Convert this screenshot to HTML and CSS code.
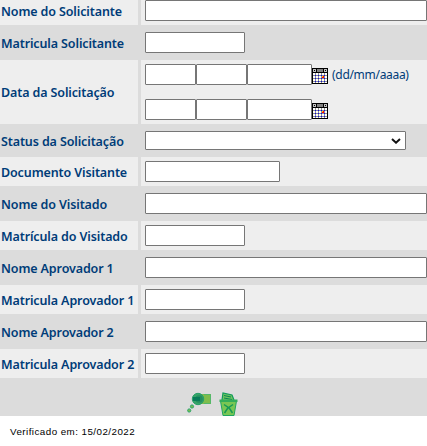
FILE: index.html
```html
<!DOCTYPE html>
<html lang="pt-BR">
<head>
<meta charset="utf-8">
<title>Solicitação</title>
<link rel="stylesheet" href="styles.css">
</head>
<body>
<svg width="0" height="0" class="defs" aria-hidden="true">
  <defs>
    <pattern id="days" width="3" height="3" patternUnits="userSpaceOnUse" x="1" y="5">
      <rect width="3" height="3" fill="#fff"/>
      <path d="M2 0h1v3h-3v-1h2z" fill="#909090"/>
      <path d="M2 2h1v1h-1z" fill="#0000f0"/>
    </pattern>
    <symbol id="calendar" viewBox="0 0 16 16">
      <path d="M0 0h16v16H0z"/>
      <path d="M1 1h3v3H1zM12 1h3v3h-3z" fill="#c0c0c0"/>
      <path d="M5 1h6v3H5z" fill="#808080"/>
      <path d="M2 2h1v1H2zM13 2h1v1h-1z"/>
      <path d="M1 5h14v10H1z" fill="url(#days)"/>
      <path d="M10 8h2v2h-2z" fill="red"/>
      <path d="M10 8h1v1h-1z" fill="#ffe000"/>
    </symbol>
  </defs>
</svg>
<form class="form">
  <div class="row first"><label>Nome do Solicitante</label><div class="field"><input class="full"></div></div>
  <div class="row dark"><label>Matricula Solicitante</label><div class="field"><input class="short"></div></div>
  <div class="row dates"><label>Data da Solicitação</label><div class="field stack">
    <div class="date"><input class="day"><input class="day"><input class="year"><svg class="cal"><use href="#calendar"/></svg><span class="hint">(dd/mm/aaaa)</span></div>
    <div class="date"><input class="day"><input class="day"><input class="year"><svg class="cal"><use href="#calendar"/></svg></div>
  </div></div>
  <div class="row dark status"><label>Status da Solicitação</label><div class="field"><div class="select"><svg width="10" height="6" viewBox="0 0 10 6"><path d="M1 1l4 3.7L9 1" fill="none" stroke="#111" stroke-width="2"/></svg></div></div></div>
  <div class="row"><label>Documento Visitante</label><div class="field"><input class="medium"></div></div>
  <div class="row dark"><label>Nome do Visitado</label><div class="field"><input class="full"></div></div>
  <div class="row"><label>Matrícula do Visitado</label><div class="field"><input class="short"></div></div>
  <div class="row dark"><label>Nome Aprovador 1</label><div class="field"><input class="full"></div></div>
  <div class="row"><label>Matricula Aprovador 1</label><div class="field"><input class="short"></div></div>
  <div class="row dark"><label>Nome Aprovador 2</label><div class="field"><input class="full"></div></div>
  <div class="row"><label>Matricula Aprovador 2</label><div class="field"><input class="short"></div></div>
  <div class="actions">
    <svg width="24" height="21" viewBox="0 0 24 21">
      <path d="M12 2h12v10H12z" fill="#7fbd4c"/>
      <path d="M17 2.5h6.5v9H17" fill="none" stroke="#55b86a"/>
      <circle cx="11" cy="7" r="5.7" fill="#36a567" stroke="#279e69"/>
      <circle cx="12" cy="7" r="3.8" fill="#248e60"/>
      <path d="M6 5h7v4H6z" fill="#087c59"/>
      <circle cx="5" cy="14.5" r="1.6" fill="#79bb4c" stroke="#2ba66d"/>
      <circle cx="2.2" cy="18.5" r="1.6" fill="#79bb4c" stroke="#2ba66d"/>
    </svg>
    <svg width="19" height="25" viewBox="0 0 19 25">
      <path d="M3 8L4 1l9 2 2 5" fill="#6fc35e" stroke="#109b5a" stroke-width="1.2"/>
      <path d="M5 3.500l7 1.500M5 6l8 1.500" stroke="#078553"/>
      <path d="M1.500 9h16l-2.500 14.500h-11z" fill="#79c653" stroke="#20a65f"/>
      <path d="M.5 7.500h18v2.500H.5z" fill="#33ad5a"/>
      <path d="M5 12.500l4.500 3 4.500-3M9.500 15l-4 6M9.500 15l4 6" fill="none" stroke="#159957" stroke-width="1.5"/>
    </svg>
  </div>
</form>
<p class="checked">Verificado em: 15/02/2022</p>
</body>
</html>
```
FILE: styles.css
```css
* { box-sizing: border-box; }
body { margin: 0; background: #fff; overflow: hidden; }
.defs { display: block; height: 0; }
.form { display: flex; flex-direction: column; gap: 3px; background: #dcdcdc; height: 416px; }
.row { display: grid; grid-template-columns: 138px 286px; column-gap: 3px; height: 29px; flex: none; }
.row > * { background: #eee; }
.dark > * { background: #dcdcdc; }
.first { height: 25px; }
.dates { height: 64px; }
.status { height: 27px; }
label {
  display: flex; align-items: center; padding: 2px 0 0 1px;
  color: #003c78; font: 600 12.5px/16px "Noto Sans", sans-serif;
  letter-spacing: -.12px; white-space: nowrap;
}
.field { padding: 4px 0 0 4px; }
.first .field { padding-top: 0; }
.first label { padding-bottom: 3px; }
input {
  display: block; height: 21px; margin: 0; padding: 1px 2px;
  border: 1px solid #767676; border-radius: 1px; background: #fff; font-size: 13px;
}
.full { width: 282px; }
.short { width: 100px; }
.medium { width: 135px; }
.day { width: 51px; }
.year { width: 65px; }
.stack { display: flex; flex-direction: column; gap: 14px; }
.date { display: flex; height: 21px; }
.cal { width: 16px; height: 16px; margin-top: 4px; shape-rendering: crispEdges; }
.hint { margin-left: 4px; color: #003c78; font: 12px/21px "Noto Sans", sans-serif; letter-spacing: -.3px; }
.select {
  display: flex; justify-content: flex-end; align-items: center;
  width: 261px; height: 19px; padding-right: 4px;
  border: 1px solid #767676; border-radius: 1px; background: #fff;
}
.actions { display: flex; gap: 8px; padding: 11px 0 0 187px; }
.checked { margin: 10px 0 0 10px; color: #000; font: 9.8px/12px "Liberation Sans", sans-serif; letter-spacing: .45px; }
```
